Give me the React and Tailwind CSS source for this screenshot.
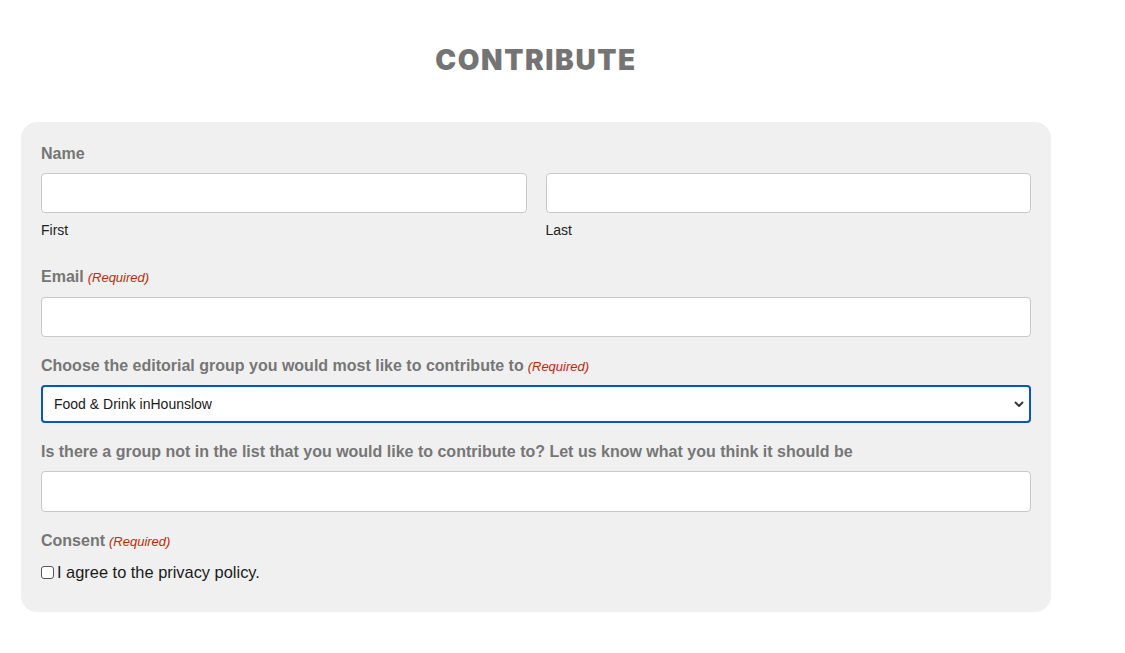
import React from "react";

function Req() {
  return (
    <span className="ml-1 text-[13px] italic font-normal text-[#c02b0a]">
      (Required)
    </span>
  );
}

function Label({ children, req }) {
  return (
    <div className="flex items-baseline text-[16px] leading-[20px] font-bold text-[#767676]">
      <span>{children}</span>
      {req && <Req />}
    </div>
  );
}

function Input() {
  return (
    <div className="h-[40px] w-full rounded-[4px] border border-[#c8c8c8] bg-white" />
  );
}

export default function App() {
  return (
    <div className="min-h-[653px] w-[1125px] bg-white font-['Liberation_Sans',Arial,sans-serif]">
      <div className="w-[1030px] ml-[21px]">
        <h1 className="pt-[41px] h-[122px] text-center text-[28px] leading-[38px] font-black tracking-[1.6px] text-[#747474] font-['Inter',sans-serif]">
          CONTRIBUTE
        </h1>
        <div className="rounded-[16px] bg-[#f0f0f0] px-5 pt-[22px] pb-[30px]">
          <Label>Name</Label>
          <div className="mt-[9px] grid grid-cols-2 gap-x-[19px]">
            <div>
              <Input />
              <div className="mt-[7px] text-[14px] leading-[20px] text-[#222]">First</div>
            </div>
            <div>
              <Input />
              <div className="mt-[7px] text-[14px] leading-[20px] text-[#222]">Last</div>
            </div>
          </div>

          <div className="mt-[27px]">
            <Label req>Email</Label>
          </div>
          <div className="mt-[9px]">
            <Input />
          </div>

          <div className="mt-[19px]">
            <Label req>Choose the editorial group you would most like to contribute to</Label>
          </div>
          <div className="mt-[8px] relative flex h-[38px] items-center rounded-[4px] border-2 border-[#0a55c4] bg-white pl-[11px]">
            <span className="text-[14px] text-[#1a1a1a]">Food &amp; Drink inHounslow</span>
            <svg className="absolute right-[4px] top-1/2 -translate-y-1/2" width="12" height="12" viewBox="0 0 12 12">
              <path d="M2.5 4.5 L6 8 L9.5 4.5" fill="none" stroke="#333" strokeWidth="1.8" strokeLinecap="round" strokeLinejoin="round" />
            </svg>
          </div>

          <div className="mt-[19px]">
            <Label>Is there a group not in the list that you would like to contribute to? Let us know what you think it should be</Label>
          </div>
          <div className="mt-[9px]">
            <div className="h-[41px] w-full rounded-[4px] border border-[#c8c8c8] bg-white" />
          </div>

          <div className="mt-[19px]">
            <Label req>Consent</Label>
          </div>
          <div className="mt-[10px] flex items-center text-[16.4px] leading-[20px] text-[#1a1a1a]">
            <span className="inline-block h-[13px] w-[13px] rounded-[3px] border border-[#555] bg-white" />
            <span className="ml-[3px]">I agree to the privacy policy.</span>
          </div>
        </div>
      </div>
    </div>
  );
}
